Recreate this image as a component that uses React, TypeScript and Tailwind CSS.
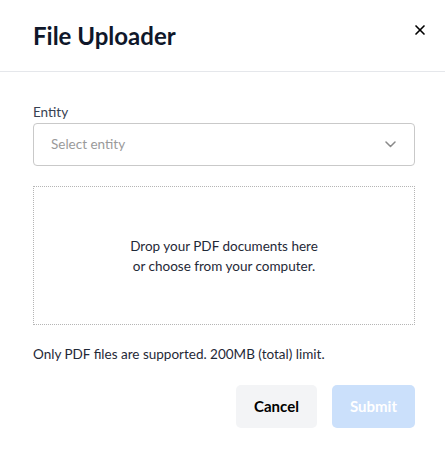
import { X } from "lucide-react";

export default function App() {
  return (
    <div className="min-h-screen w-full bg-white font-['Lato','Noto_Sans',sans-serif] text-[#1f2937]">
      <header className="relative flex h-[72px] items-center border-b border-[#e5e7eb] pl-[33px] pr-[30px]">
        <h1 className="text-[24px] font-bold leading-none text-[#0f172a]">
          File Uploader
        </h1>
        <button className="absolute right-[17px] top-[22px] text-black">
          <X size={16} strokeWidth={2.5} />
        </button>
      </header>

      <div className="pl-[33px] pr-[30px] pt-[31px]">
        <label className="block text-[13.5px] leading-[18px] text-[#374151]">
          Entity
        </label>
        <div className="mt-[2px] flex h-[43px] items-center justify-between rounded-[4px] border border-[#c9c9c9] pl-[17px] pr-[18px]">
          <span className="text-[13.5px] text-[#9a9a9a]">Select entity</span>
          <svg width="11" height="7" viewBox="0 0 11 7" fill="none">
            <path
              d="M1 1l4.5 4.5L10 1"
              stroke="#8a8a8a"
              strokeWidth="1.5"
              strokeLinecap="round"
              strokeLinejoin="round"
            />
          </svg>
        </div>

        <div className="mt-[20px] flex h-[139px] items-center justify-center border border-dotted border-[#b5b5b5] text-center text-[13.5px] leading-[20px] text-[#1f2937]">
          <p>
            Drop your PDF documents here
            <br />
            or choose from your computer.
          </p>
        </div>

        <p className="mt-[20px] text-[13.5px] leading-[18px] text-[#1f2937]">
          Only PDF files are supported. 200MB (total) limit.
        </p>

        <div className="mt-[22px] flex justify-end gap-[15px]">
          <button className="h-[43px] w-[81px] rounded-[5px] bg-[#f3f4f6] text-[15px] font-bold text-black">
            Cancel
          </button>
          <button className="h-[43px] w-[83px] rounded-[5px] bg-[#cbe0fb] text-[15px] font-bold text-white">
            Submit
          </button>
        </div>
      </div>
    </div>
  );
}
